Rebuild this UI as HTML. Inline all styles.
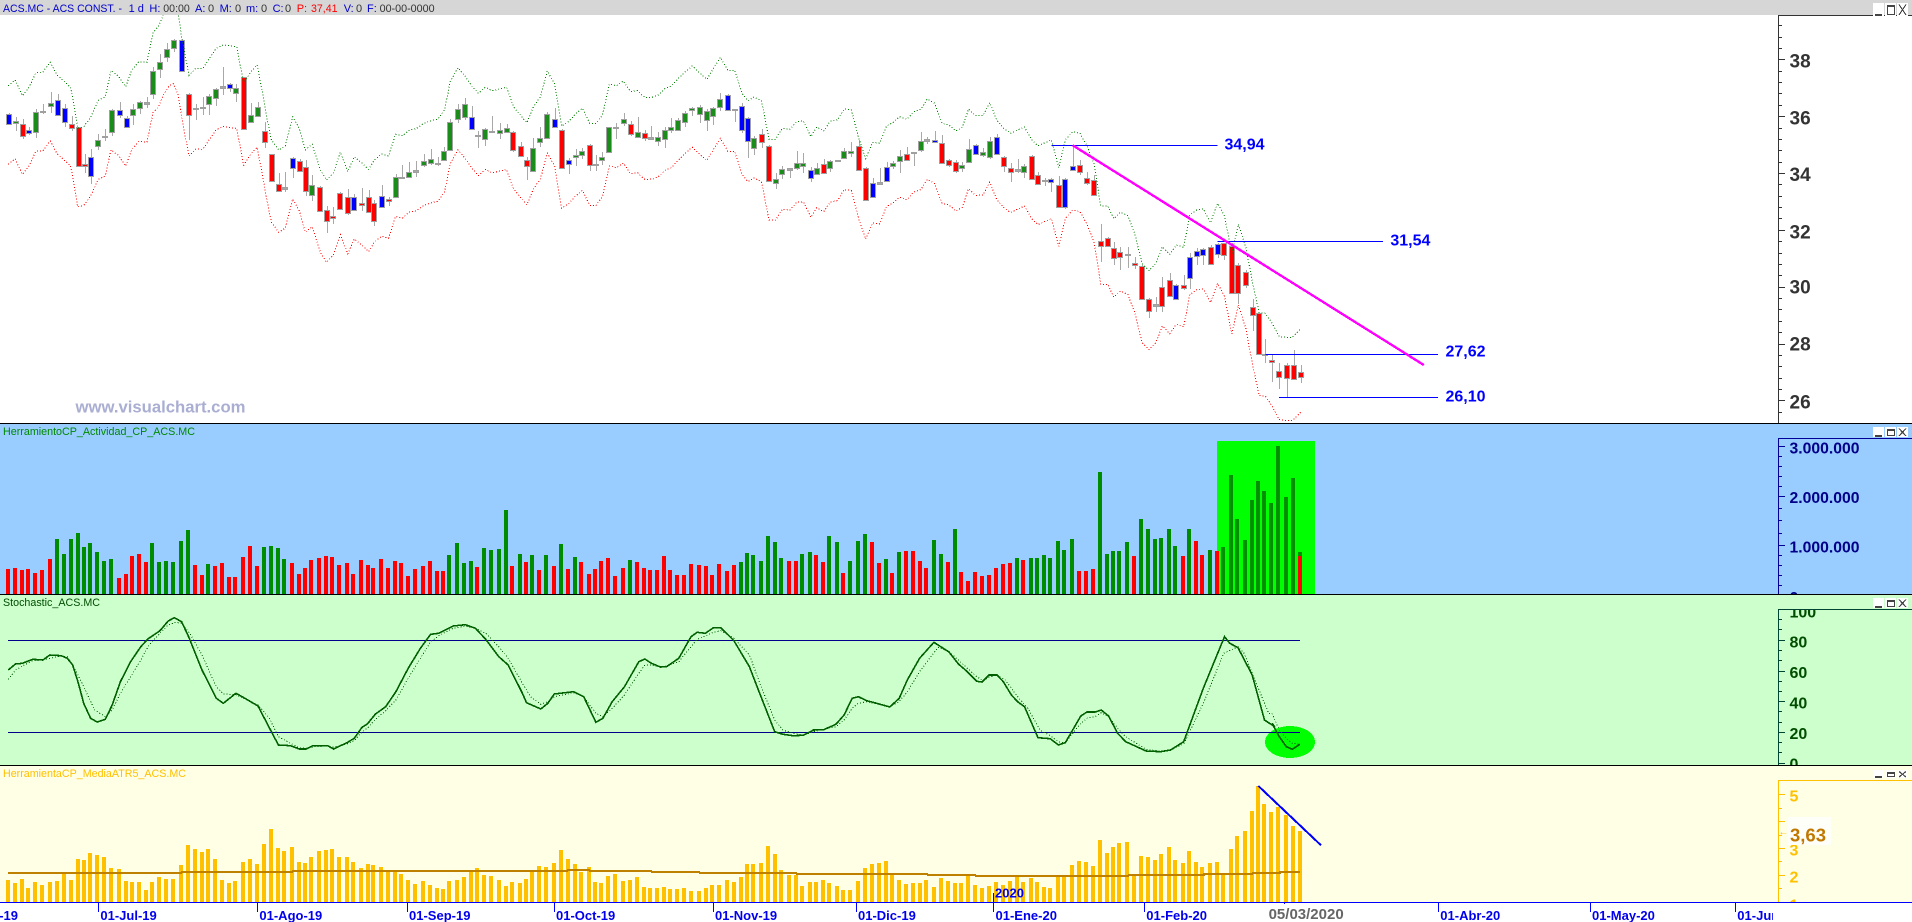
<!DOCTYPE html>
<html lang="es"><head><meta charset="utf-8"><title>ACS.MC</title>
<style>
html,body{margin:0;padding:0;background:#fff;width:1912px;height:922px;overflow:hidden}
svg{display:block;position:absolute;left:0;top:0}
text{font-family:"Liberation Sans",sans-serif}
.b{font-weight:bold}
</style></head><body>
<svg id="s" width="1912" height="922" viewBox="0 0 1912 922" xmlns="http://www.w3.org/2000/svg">
<defs>
<clipPath id="c1"><rect x="0" y="15" width="1912" height="408"/></clipPath>
<clipPath id="c2"><rect x="1780" y="439" width="132" height="155"/></clipPath>
<clipPath id="c3"><rect x="1780" y="610" width="132" height="155"/></clipPath>
<clipPath id="c4"><rect x="1780" y="781" width="132" height="121"/></clipPath>
<clipPath id="cd"><rect x="0" y="903" width="1773" height="19"/></clipPath>
</defs>
<rect x="0" y="0" width="1912" height="922" fill="#fff"/>
<rect x="0" y="0" width="1912" height="15" fill="#d6d6d6"/>
<rect x="0" y="424" width="1912" height="170" fill="#99ccff"/>
<rect x="0" y="595" width="1912" height="170" fill="#ccffcc"/>
<rect x="0" y="766" width="1912" height="136" fill="#ffffe6"/>
<rect x="1217" y="441" width="98" height="153" fill="#00ff00"/>
<ellipse cx="1290" cy="742" rx="25" ry="16" fill="#00ff00" shape-rendering="crispEdges"/>
<g shape-rendering="crispEdges">
<rect x="0" y="423" width="1912" height="1" fill="#000"/>
<rect x="0" y="594" width="1912" height="1" fill="#000"/>
<rect x="0" y="765" width="1912" height="1" fill="#000"/>
<rect x="0" y="902" width="1912" height="1" fill="#0000ff"/>
</g>
<g id="g1" clip-path="url(#c1)"></g>
<g id="g2"></g>
<g id="g3"></g>
<g id="g4"></g>
<g id="g5" shape-rendering="crispEdges"></g>

<g font-size="11">
<text x="3" y="12" fill="#0000cc" textLength="119" lengthAdjust="spacingAndGlyphs">ACS.MC - ACS CONST. -</text>
<text x="128.6" y="12" fill="#0000cc">1 d</text>
<text x="149.4" y="12" fill="#0000cc">H:</text><text x="163.3" y="12" fill="#333" textLength="26.5" lengthAdjust="spacingAndGlyphs">00:00</text>
<text x="195" y="12" fill="#0000cc">A:</text><text x="208" y="12" fill="#333">0</text>
<text x="219.6" y="12" fill="#0000cc">M:</text><text x="235" y="12" fill="#333">0</text>
<text x="246" y="12" fill="#0000cc">m:</text><text x="261" y="12" fill="#333">0</text>
<text x="272.6" y="12" fill="#0000cc">C:</text><text x="285" y="12" fill="#333">0</text>
<text x="296.7" y="12" fill="#ff0000">P:</text><text x="311" y="12" fill="#ff0000" textLength="26.5" lengthAdjust="spacingAndGlyphs">37,41</text>
<text x="343.7" y="12" fill="#0000cc">V:</text><text x="356" y="12" fill="#333">0</text>
<text x="367" y="12" fill="#0000cc">F:</text><text x="379.6" y="12" fill="#333" textLength="55" lengthAdjust="spacingAndGlyphs">00-00-0000</text>
<text x="3" y="435" fill="#008800" textLength="192" lengthAdjust="spacingAndGlyphs">HerramientoCP_Actividad_CP_ACS.MC</text>
<text x="3" y="606" fill="#004d00" textLength="97" lengthAdjust="spacingAndGlyphs">Stochastic_ACS.MC</text>
<text x="3" y="777" fill="#ffc000" textLength="183" lengthAdjust="spacingAndGlyphs">HerramientaCP_MediaATR5_ACS.MC</text>
</g>

<text x="75.5" y="412.5" class="b" font-size="16.5" fill="#a9aed2" textLength="170" lengthAdjust="spacingAndGlyphs">www.visualchart.com</text>

<g class="b" font-size="16" fill="#0000ff">
<text x="1224.5" y="149.5" textLength="40" lengthAdjust="spacingAndGlyphs">34,94</text>
<text x="1390.4" y="245.3" textLength="40" lengthAdjust="spacingAndGlyphs">31,54</text>
<text x="1445.5" y="356.3" textLength="40" lengthAdjust="spacingAndGlyphs">27,62</text>
<text x="1445.5" y="401.3" textLength="40" lengthAdjust="spacingAndGlyphs">26,10</text>
</g>

<g class="b" font-size="19" fill="#333">
<text x="1789.5" y="67.3">38</text><text x="1789.5" y="124.3">36</text><text x="1789.5" y="181">34</text>
<text x="1789.5" y="238.3">32</text><text x="1789.5" y="293.7">30</text><text x="1789.5" y="350.7">28</text><text x="1789.5" y="408.3">26</text>
</g>

<g class="b" font-size="16" fill="#000088" clip-path="url(#c2)">
<text x="1789.5" y="453.3" textLength="70" lengthAdjust="spacingAndGlyphs">3.000.000</text>
<text x="1789.5" y="502.9" textLength="70" lengthAdjust="spacingAndGlyphs">2.000.000</text>
<text x="1789.5" y="552.3" textLength="70" lengthAdjust="spacingAndGlyphs">1.000.000</text>
<text x="1789.5" y="603">0</text>
</g>
<g class="b" font-size="16" fill="#004d00" clip-path="url(#c3)">
<text x="1789.5" y="617.6">100</text><text x="1789.5" y="647.3">80</text><text x="1789.5" y="678">60</text>
<text x="1789.5" y="708.6">40</text><text x="1789.5" y="739">20</text><text x="1789.5" y="769.6">0</text>
</g>
<g class="b" font-size="16" fill="#ffc000" clip-path="url(#c4)">
<text x="1789.5" y="801.3">5</text><text x="1789.5" y="855.6">3</text><text x="1789.5" y="882.3">2</text><text x="1789.5" y="910.5">1</text>
</g>
<rect x="1788" y="817" width="43" height="28" fill="#fffffa"/>
<text x="1790" y="841.5" class="b" font-size="18.5" fill="#c07800">3,63</text>
<text x="1778.5" y="835" font-size="10" fill="#ffc000">←</text>

<g class="b" font-size="13" fill="#0000ee" clip-path="url(#cd)">
<text x="-42.7" y="920">01-Jun-19</text>
<text x="100.4" y="920">01-Jul-19</text>
<text x="259.4" y="920">01-Ago-19</text>
<text x="409" y="920">01-Sep-19</text>
<text x="556" y="920">01-Oct-19</text>
<text x="715" y="920">01-Nov-19</text>
<text x="858" y="920">01-Dic-19</text>
<text x="995.5" y="920">01-Ene-20</text>
<text x="1146.3" y="920">01-Feb-20</text>
<text x="1440.3" y="920">01-Abr-20</text>
<text x="1592" y="920">01-May-20</text>
<text x="1737.3" y="920">01-Jun-20</text>
</g>
<text x="995" y="897.5" class="b" font-size="13" fill="#0000ee">2020</text>
<rect x="1266" y="904" width="82" height="17" fill="#fff"/>
<text x="1268.6" y="919" class="b" font-size="15" fill="#666">05/03/2020</text>
</svg>
<script>
(function(){
var NS="http://www.w3.org/2000/svg";
function el(p,n,a){var e=document.createElementNS(NS,n);for(var k in a)e.setAttribute(k,a[k]);document.getElementById(p).appendChild(e);return e}
function R(p,x,y,w,h,f){el(p,"rect",{x:x,y:y,width:w,height:h,fill:f,"shape-rendering":"crispEdges"})}
var C1="b22 338 341 373 375;g38 350 362 370 392;r56 357 371 409 416;b72 380 389 400 405;g89 327 335 397 413;d106 312 334 336 342;g124 277 308 318 340;b141 283 299 346 349;b159 312 323 366 380;r176 348 371 385 392;r193 382 382 498 502;r208 462 491 498 518;b224 447 470 529 553;g241 403 421 439 450;d258 388 409 412 422;g275 328 331 397 407;b294 307 329 346 353;b311 347 353 381 383;g327 313 326 346 375;g344 303 305 324 342;d361 292 307 311 325;g376 202 212 283 298;g393 163 187 208 234;g410 129 146 170 186;g427 117 121 145 155;b446 118 119 214 214;r463 280 281 346 420;d480 312 325 328 360;b497 292 320 325 345;g513 283 289 311 345;g530 263 266 295 318;d547 201 259 265 285;b563 250 251 265 276;g579 252 263 279 305;r597 230 230 388 388;g614 310 344 367 370;g631 307 320 348 352;r649 366 392 427 443;r666 462 463 544 545;r683 518 551 574 575;d699 516 562 566 575;b717 472 473 505 533;r734 478 484 513 515;r750 481 500 574 587;g765 525 556 586 603;r784 559 560 634 637;r800 618 629 664 700;r817 621 647 655 671;r834 576 580 628 630;r852 568 590 640 645;b868 582 592 631 633;r886 564 610 616 632;r903 571 590 636 640;r917 600 610 664 678;b935 555 587 622 625;r952 590 596 604 617;g969 522 530 592 593;d986 495 530 534 535;g1003 487 515 531 533;d1020 483 511 517 530;g1038 462 484 496 500;g1056 447 476 490 495;d1072 470 488 491 497;g1089 441 452 481 483;g1103 358 365 451 452;g1121 312 328 358 368;g1139 295 311 352 361;b1156 318 352 387 390;d1172 393 405 407 443;g1189 385 386 418 437;d1206 348 394 397 400;g1224 370 391 400 418;g1241 372 385 395 400;r1258 393 395 451 456;r1276 425 437 469 472;r1291 470 479 499 540;g1307 415 443 514 515;g1324 382 415 427 440;g1341 337 341 415 417;b1359 325 356 380 384;r1376 388 389 505 507;b1393 475 479 492 522;g1410 448 466 472 498;g1427 445 452 464 478;r1445 433 434 496 513;r1460 466 491 495 513;g1476 455 470 481 495;g1493 380 380 457 458;d1510 368 382 384 416;g1528 340 358 370 377;r1546 362 371 402 408;g1562 350 397 412 413";
var C2="r12 390 398 415 422;d28 378 411 416 420;g45 395 410 422 437;g62 382 389 417 443;g77 353 382 391 398;g94 355 361 391 392;g111 333 340 367 380;g128 320 323 331 348;g147 315 320 342 368;g164 328 333 361 392;g180 320 323 349 375;g197 279 296 320 333;b215 282 284 331 333;d232 326 328 331 366;b250 310 317 391 398;b264 352 353 424 473;g280 407 415 443 466;r298 388 401 426 445;r316 436 437 542 543;g332 518 538 548 566;g349 498 508 523 537;d367 504 505 509 535;g384 453 488 505 510;g400 459 488 499 518;b419 502 509 533 545;g433 490 505 523 525;r450 478 491 520 522;g466 480 484 505 517;b484 481 481 483 483;g500 445 452 475 476;g518 425 452 460 470;r536 420 437 511 512;r553 500 503 600 602;b570 535 548 592 594;d587 505 547 551 552;b604 487 500 544 546;g619 483 490 497 507;g636 450 469 484 520;r654 441 461 480 482;b671 455 457 459 498;g688 395 422 451 455;d704 410 418 423 432;b722 394 419 427 428;r740 405 428 490 492;r757 476 479 496 500;r774 480 485 514 520;g790 485 496 505 515;g805 418 446 487 490;b822 432 434 463 464;g840 445 455 466 470;g857 411 424 472 476;b874 403 410 463 465;r891 468 470 499 516;r908 490 503 517 546;d925 477 508 512 519;g942 492 499 517 534;r960 466 467 537 540;r975 517 524 553 555;r992 534 539 544 558;b1008 534 536 547 575;r1026 528 554 622 623;b1042 535 536 620 627;b1060 438 497 511 512;r1078 480 496 517 524;r1095 517 533 550 554;r1112 525 539 586 587;r1129 672 722 739 785;r1146 710 713 737 740;r1161 727 743 775 795;r1177 740 755 772 810;r1195 742 761 766 805;r1212 770 788 796 806;r1230 796 797 896 900;r1247 895 896 934 953;d1264 890 912 917 935;r1280 832 860 919 936;r1298 820 839 887 890;b1314 852 854 898 900;r1332 825 856 865 870;b1347 760 770 835 868;b1364 745 752 769 795;b1380 745 748 766 795;r1398 735 740 793 795;b1415 730 731 763 775;r1432 729 730 766 780;r1450 730 738 880 880;r1466 788 794 880 912;r1484 810 815 856 865;r1501 897 922 946 992;r1517 938 939 1063 1064;d1532 1018 1062 1065 1088;r1549 1065 1081 1087 1145;r1566 1090 1114 1130 1168";
var C3="r36 1090 1094 1133 1192;r53 1050 1094 1138 1140;r70 1095 1115 1131 1148";
var col={r:"#ff0000",g:"#1a8c1a",b:"#0000ff",d:"#a8a8a8"};
var xs=[];
function cand(str,off){str.split(";").forEach(function(s){
 var c=s[0],v=s.slice(1).split(" ").map(Number);
 var px=Math.round(v[0]/2.45+off);xs.push(px);
 var h=Math.round(v[1]/3),t=Math.round(v[2]/3),b=Math.round(v[3]/3),l=Math.round(v[4]/3);
 if(l>h)R("g1",px,h,1,l-h,"#a8a8a8");
 var ht=Math.max(b-t,1);
 R("g1",px-3,t,6,ht+1,"#a0a0a0");
 if(ht>1)R("g1",px-2,t+1,4,ht-1,col[c]);
});}
cand(C1,0);cand(C2,640);cand(C3,1272);

/* envelopes */
var G1="20,257 37,240 55,287 72,260 88,218 105,216 123,187 140,225 158,245 173,262 182,320 190,385 205,380 222,352 240,302 258,290 272,212 290,228 308,260 323,210 340,185 360,187 375,97 388,80 400,45 415,15 425,10 437,45 445,110 463,226 480,205 497,205 513,175 530,145 547,135 580,140 597,250 615,215 630,195 645,290 655,360 665,420 683,450 699,437 717,350 733,385 748,450 765,433 785,510 800,540 817,518 834,457 852,515 868,470 886,488 903,508 917,480 935,462 952,468 969,403 986,407 1003,390 1020,386 1038,370 1056,362 1072,358 1089,330 1103,245 1122,203 1139,228 1156,258 1172,280 1189,262 1206,272 1224,267 1241,262 1258,320 1276,347 1291,368 1307,320 1324,290 1341,213 1359,252 1376,378 1393,365 1410,342 1427,325 1445,370 1460,370 1476,345 1493,252 1510,257 1527,243 1545,275 1562,272";
var G2="0,280 12,292 30,292 45,285 62,265 77,258 94,235 111,215 128,198 147,220 164,238 180,205 197,172 215,211 232,211 250,280 264,302 280,291 298,303 316,418 332,418 349,385 367,388 384,365 400,363 419,410 433,381 450,393 466,364 484,360 500,327 518,330 536,415 553,476 570,427 587,430 604,378 619,368 636,350 654,358 671,335 688,328 704,297 722,310 740,370 757,375 774,393 790,382 805,327 822,347 840,347 857,308 874,360 891,385 908,400 925,390 942,381 960,420 975,437 992,428 1008,420 1026,503 1042,420 1060,395 1078,400 1095,437 1112,490 1129,618 1146,618 1161,656 1177,637 1195,647 1212,700 1230,790 1247,812 1264,790 1280,740 1298,763 1314,735 1332,742 1347,645 1364,630 1380,627 1398,668 1415,610 1432,648 1450,760 1466,673 1484,740 1501,850 1517,938 1532,940 1549,970 1566,1010";
var G3="36,1012 50,1012 70,987";
function pts(str,off){return str.split(" ").map(function(p){var a=p.split(",");return [a[0]/2.45+off,+a[1]/3]})}
var O=[[8,236],[78,236],[190,242],[260,247],[640,246],[720,243],[928,241],[1072,235],[1100,235],[1218,240],[1238,242],[1260,248],[1300,250]];
function off(x){for(var i=1;i<O.length;i++){if(x<=O[i][0]){var a=O[i-1],b=O[i];return a[1]+(b[1]-a[1])*(x-a[0])/(b[0]-a[0])}}return 250}
var up=pts(G1,0).concat(pts(G2,640),pts(G3,1272));
function ps(a){return a.map(function(p){return p[0].toFixed(1)+","+p[1].toFixed(1)}).join(" ")}
function dot(p,a,c,w){el(p,"polyline",{points:ps(a),fill:"none",stroke:c,"stroke-width":w||1,"stroke-dasharray":"1 2","shape-rendering":"crispEdges"})}
dot("g1",up,"#008000");
dot("g1",up.map(function(p){return [p[0],p[1]+off(p[0])/3]}),"#ff0000");

/* annotation lines */
function L(p,x1,y1,x2,y2,c,w,cr){var a={x1:x1,y1:y1,x2:x2,y2:y2,stroke:c,"stroke-width":w};if(cr)a["shape-rendering"]="crispEdges";el(p,"line",a)}
L("g1",1051.4,145.5,1217.6,145.5,"#0000ff",1,1);
L("g1",1217.5,241.5,1383,241.5,"#0000ff",1,1);
L("g1",1265.3,354.5,1438,354.5,"#0000ff",1,1);
L("g1",1279,397.5,1438,397.5,"#0000ff",1,1);
L("g1",1072.7,145.3,1423.8,365,"#ff00ff",2.4,1);

/* volume */
var V="r447 r444 r450 r447 r459 r450 r417 g357 g402 g357 g339 g381 g369 g396 g423 g417 r474 r462 r408 r402 r426 g369 g426 g423 g426 g363 g330 r435 r465 g432 r438 r429 r471 r471 r411 r378 r438 g381 g378 g384 g417 r429 r462 r444 r420 r414 r408 r411 r435 r429 r462 r420 r435 r444 r417 r444 r423 r429 r468 r447 r438 r423 r453 r453 g405 g369 g429 g423 r441 g384 g390 g387 g270 r438 g402 r426 g405 r450 g405 r438 g372 r447 g411 r426 r462 r447 r423 r414 r468 r444 g420 r426 "+
"r444 r450 r450 r408 r450 r465 r465 r432 r435 r438 r465 r432 r453 r435 g426 g399 g405 g423 g348 g366 g414 r423 r423 g402 g396 r405 r426 g348 g366 r459 g423 g363 g342 r366 r429 g417 r459 g396 r393 r393 r423 r444 g360 g402 r426 g327 r456 r483 r456 r468 r465 r444 r432 r429 g414 r420 g414 g414 g405 g414 g363 g390 g357 r453 r453 r447 g156 g402 g393 g393 g366 r408 g297 g327 g357 g354 g327 g378 r408 g327 r363 r405 g390 r393 g381 g165 g297 g360 g240 g183 g213 g249 g78 g231 g174 g396";
V.split(" ").forEach(function(s,i){
 var t=Math.round(420+s.slice(1)/3),x=xs[i];
 if(x===undefined)return;
 R("g2",x-3,t,4,594-t,s[0]=="r"?"#ff0000":(x>1217?"#009000":"#008c00"));
});
R("g2",xs[187]-3,556,4,38,"#ff0000");

/* stochastic */
L("g3",8,640.5,1300,640.5,"#00008b",1,1);
L("g3",8,732.5,1300,732.5,"#00008b",1,1);
function line(str,off){return str.split(" ").map(function(p){var a=p.split(",");return [a[0]/2.45+off,590+a[1]/3]})}
var M=line("20,240 38,222 55,220 80,208 105,210 122,195 150,197 165,205 178,225 192,280 205,340 222,385 238,396 258,388 275,345 295,275 320,215 345,170 362,147 392,122 412,93 427,83 445,95 462,140 495,240 530,325 547,340 578,310 600,325 632,348 665,425 682,465 712,467 733,477 750,477 767,467 803,467 817,477 850,458 868,445 887,412 900,402 920,372 945,350 970,305 1000,235 1030,175 1055,133 1075,130 1110,108 1140,104 1165,115 1190,148 1222,200 1245,225 1280,310 1290,338 1325,357 1342,340 1358,312 1405,305 1430,320 1460,397 1477,385 1500,335 1530,290 1565,215",0)
 .concat(line("12,207 28,220 50,231 65,230 95,205 125,140 140,127 160,130 180,113 198,113 230,152 268,230 290,300 330,425 350,433 375,437 400,436 425,420 450,419 480,403 500,375 520,325 535,320 555,332 580,340 612,351 635,325 655,270 685,205 720,157 757,186 780,222 800,243 825,274 838,276 855,255 875,255 890,275 910,315 925,335 942,350 975,443 1005,446 1025,465 1042,458 1080,378 1095,366 1115,366 1130,360 1148,378 1170,430 1190,455 1240,483 1275,485 1300,480 1332,455 1380,295 1432,140 1445,160 1465,173 1500,255 1530,390 1555,410",640),
 line("0,400 18,440 35,470 50,478 68,463",1272));
var S=line("20,268 38,240 55,228 80,212 105,210 122,205 150,198 165,200 185,240 205,290 232,360 258,380 275,360 295,310 320,260 345,210 365,165 392,130 412,105 430,97 445,100 465,130 495,195 530,290 547,312 578,314 600,327 632,345 660,385 682,440 712,460 733,473 750,475 767,470 803,468 817,472 850,462 868,452 887,425 900,415 920,388 945,362 970,330 1000,265 1030,205 1055,155 1075,137 1110,115 1140,108 1165,115 1190,130 1222,170 1245,205 1280,280 1300,320 1325,343 1342,335 1358,320 1405,308 1430,320 1460,370 1477,380 1500,355 1530,315 1565,250",0)
 .concat(line("12,225 28,225 50,231 65,228 95,215 125,170 140,148 160,138 180,127 198,122 230,145 268,195 300,300 330,390 350,420 375,430 400,435 425,425 450,418 480,410 500,390 520,355 535,340 555,335 580,342 612,350 635,335 655,305 685,245 730,172 757,185 780,210 825,260 840,272 855,262 875,255 895,270 925,320 950,355 980,420 1005,437 1025,455 1042,458 1080,400 1095,385 1115,380 1130,368 1148,380 1170,415 1190,440 1240,478 1275,484 1300,480 1332,462 1380,340 1430,190 1465,170 1480,190 1510,280 1540,370",640),
 line("0,370 18,420 35,445 50,460 68,463",1272));
dot("g3",S,"#006000");
el("g3","polyline",{points:ps(M),fill:"none",stroke:"#006000","stroke-width":1.6,"shape-rendering":"crispEdges"});

/* ATR */
var A1="360 369 357 384 366 375 366 363 342 360 297 300 279 285 291 324 327 363 366 366 390 366 351 357 357 315 255 267 276 267 297 360 369 363 306 297 312 252 207 264 273 261 306 309 291 273 270 267 291 291 306 324 312 315 321 336 336 342 360 372 363 375 384 387 363 360 351 330 324 345 348 360 378 366 369 357 333 318 321 309 270 297 312 336 321 366 369 348 342 363 360 351 "+
"381 384 384 381 387 387 384 393 393 384 375 375 360 366 351 312 312 309 258 282 330 345 345 378 366 366 360 369 378 390 390 363 324 312 309 303 345 360 372 369 369 360 381 354 363 369 369 345 375 384 378 366 375 363 345 366 354 366 381 384 345 345 315 303 306 318 240 279 261 249 246 345 288 291 300 282 261 300 309 273 306 321 309 306 342 267 228 213 153 78 132 156 141 165 198 213";
A1.split(" ").forEach(function(v,i){var t=Math.round(760+v/3),x=xs[i];if(x!==undefined)R("g4",x-3,t,4,902-t,"#ffc000")});
function step(a,off,cc){a.forEach(function(s){R("g4",Math.round(s[0]/2.45+off),Math.round(760+s[2]/3)-1,Math.round((s[1]-s[0])/2.45)+1,2,"#bf8000")})}
step([[20,443,338],[443,716,335],[716,1390,332],[1390,1443,329],[1443,1568,332]],0);
step([[0,28,332],[28,145,335],[145,382,338],[382,703,341],[703,820,344],[820,1195,347],[1195,1380,344],[1380,1500,341],[1500,1568,338]],640);
step([[0,18,338],[18,68,335]],1272);
L("g4",1258.4,786,1321,845.3,"#0000ff",2,1);

/* axes */
function axis(x,y1,y2,c,maj,min){
 R("g5",x,y1,1,y2-y1,c);R("g5",x,y1,1912-x,1,c);
 maj.forEach(function(y){R("g5",x,Math.round(y),7,1,c)});
 min.forEach(function(y){R("g5",x,Math.round(y),4,1,c)});
}
var mj=[],mn=[];for(var i=0;i<7;i++){mj.push(59.3+i*56.85)}
for(var k=-4;k<32;k++){var y=59.3+k*11.37;if(y>15&&y<423&&(k%5!==0))mn.push(y)}
axis(1778,15,423,"#333333",mj,mn);
axis(1778,438,594,"#000099",[446,496,545],[456,466,476,486,508,520,533,555,565,575,585]);
axis(1778,609,765,"#004433",[640,671,701,732,763],[619,629,650,660,681,691,711,722,742,752]);
axis(1778,780,902,"#ffc000",[794,821,848,875],[808,835,861,888]);

/* date ticks */
[98,257,407,554,713,856,993,1144,1438,1590,1735].forEach(function(x){R("g5",x,902,1,10,"#0000ff")});
R("g5",1284,902,1,2,"#0000ff");
R("g5",993,893,1,9,"#0000ff");

/* window buttons */
[[3,13],[427,10],[598,10],[770,8]].forEach(function(b){
 var y=b[0],h=b[1];
 [1873,1885,1897].forEach(function(x){R("g5",x,y,11,h,"#fff")});
 var c="#444";
 var bt=y+h-2;
 R("g5",1875,bt,7,2,c);
 R("g5",1887,y+2,8,1,c);R("g5",1887,y+3,8,1,c);R("g5",1887,bt,8,1,c);R("g5",1887,y+2,1,bt-y-1,c);R("g5",1894,y+2,1,bt-y-1,c);
 L("g5",1899,y+1.5,1906,bt+1,c,1.2);L("g5",1906,y+1.5,1899,bt+1,c,1.2);
});
})();
</script>
</body></html>
